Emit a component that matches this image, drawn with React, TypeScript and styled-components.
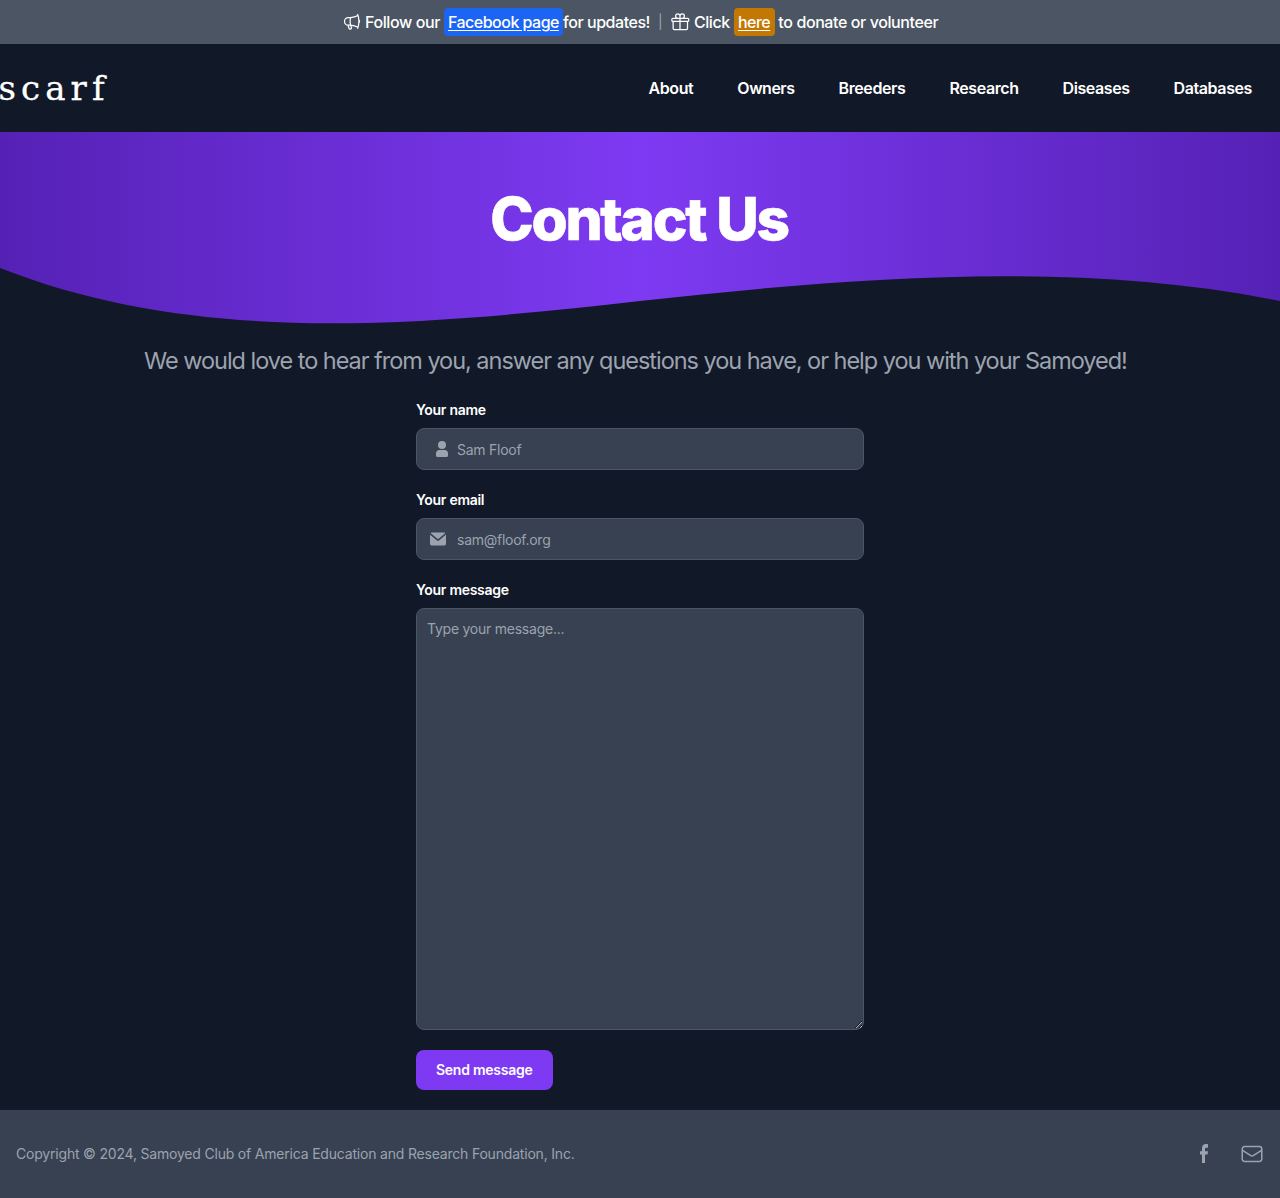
import React from 'react';
import styled, { createGlobalStyle } from 'styled-components';
import { HiOutlineMegaphone, HiOutlineGift } from 'react-icons/hi2';

const Global = createGlobalStyle`
  *, *::before, *::after { box-sizing: border-box; }
  body { margin: 0; background: #111827; font-family: Inter, "Liberation Sans", sans-serif; }
  a { color: inherit; }
`;

const Page = styled.div`
  min-height: 1198px;
  display: flex;
  flex-direction: column;
  color: #fff;
`;

const Text = styled.span<{ $ls?: number }>`
  letter-spacing: ${(p) => p.$ls ?? 0}px;
  white-space: pre;
`;

const Banner = styled.div`
  height: 44px;
  padding-left: 342px;
  background: #4b5563;
  display: flex;
  align-items: center;
  font-size: 16px;
  font-weight: 500;
  line-height: 20px;
  svg { width: 20px; height: 20px; flex: none; }
`;

const BannerItem = styled.div<{ $width: number; $gap?: number }>`
  display: flex;
  align-items: center;
  gap: ${(p) => p.$gap ?? 3}px;
  flex: none;
  width: ${(p) => p.$width}px;
`;

const Divider = styled.span`
  color: #9ca3af;
  font-size: 14px;
  font-weight: 400;
`;

const Pill = styled.a<{ $bg: string; $width: number }>`
  width: ${(p) => p.$width}px;
  height: 28px;
  display: block;
  flex: none;
  padding: 4px;
  border-radius: 4px;
  background: ${(p) => p.$bg};
  letter-spacing: -0.52px;
  white-space: nowrap;
  text-underline-offset: 2px;
`;

const Header = styled.header`
  height: 88px;
  padding-right: 28px;
  display: flex;
  align-items: center;
  justify-content: space-between;
`;

const Logo = styled.a`
  margin-left: -1.5px;
  font-family: "DejaVu Serif", serif;
  font-size: 34px;
  line-height: 40px;
  letter-spacing: 5.1px;
  text-decoration: none;
  -webkit-text-stroke: 0.3px #fff;
`;

const Nav = styled.nav`
  display: flex;
  gap: 44px;
  font-size: 16px;
  font-weight: 600;
  line-height: 24px;
`;

const Hero = styled.section`
  height: 192px;
  background: linear-gradient(90deg, #5521b5 0%, #7e3af2 50%, #5521b5 100%);
  display: flex;
  flex-direction: column;
  justify-content: space-between;
`;

const Title = styled.h1`
  margin: 57px 0 0;
  padding-right: 2px;
  text-align: center;
  font-size: 58.5px;
  line-height: 60px;
  font-weight: 800;
  letter-spacing: -2.3px;
  word-spacing: 0.5px;
  -webkit-text-stroke: 0.6px #fff;
`;

const Wave = styled.svg`
  display: block;
  width: 100%;
  height: 60px;
`;

const Lead = styled.p`
  margin: 19px 0 0 144px;
  font-size: 23.5px;
  line-height: 36px;
  color: #9ca3af;
  letter-spacing: -1.03px;
  white-space: nowrap;
`;

const Form = styled.form`
  width: 448px;
  margin: 21px auto 20px;
  display: flex;
  flex-direction: column;
  align-items: flex-start;
`;

const Label = styled.label`
  font-size: 14px;
  font-weight: 600;
  line-height: 20px;
  letter-spacing: -0.28px;
  margin-bottom: 8px;
`;

const Field = styled.div`
  width: 100%;
  height: 42px;
  margin-bottom: 20px;
  padding-left: 13px;
  display: flex;
  align-items: center;
  background: #374151;
  border: 1px solid #4b5563;
  border-radius: 8px;
`;

const IconSlot = styled.span<{ $shift?: number }>`
  display: flex;
  width: 27px;
  padding-left: ${(p) => p.$shift ?? 0}px;
  color: #9ca3af;
  svg { flex: none; }
`;

const Input = styled.input`
  flex: 1;
  padding: 2px 0 0;
  border: 0;
  outline: 0;
  background: transparent;
  color: #fff;
  font: 400 14px/20px Inter, sans-serif;
  letter-spacing: -0.26px;
  &::placeholder { color: #9ca3af; opacity: 1; }
`;

const Message = styled.textarea`
  width: 448px;
  height: 422px;
  display: block;
  margin: 0 0 20px;
  padding: 10px;
  background: #374151;
  border: 1px solid #4b5563;
  border-radius: 8px;
  color: #fff;
  font: 400 14px/20px Inter, sans-serif;
  letter-spacing: -0.24px;
  resize: vertical;
  &::placeholder { color: #9ca3af; opacity: 1; }
`;

const Send = styled.button`
  width: 136.5px;
  height: 40px;
  padding: 0;
  border: 0;
  border-radius: 8px;
  background: #7e3af2;
  color: #fff;
  font: 600 14px/20px Inter, sans-serif;
  letter-spacing: -0.25px;
`;

const Footer = styled.footer`
  height: 88px;
  padding: 0 16px;
  background: #374151;
  color: #9ca3af;
  display: flex;
  align-items: center;
  justify-content: space-between;
  font-size: 14px;
  line-height: 20px;
`;

const Social = styled.div`
  display: flex;
  align-items: center;
  gap: 24px;
`;

const links: [string, number][] = [
  ['About', -0.4],
  ['Owners', -0.5],
  ['Breeders', -0.38],
  ['Research', -0.42],
  ['Diseases', -0.42],
  ['Databases', -0.4],
];

export default function App() {
  return (
    <Page>
      <Global />
      <Banner>
        <BannerItem $width={102}>
          <HiOutlineMegaphone />
          <Text $ls={-0.4}>Follow our</Text>
        </BannerItem>
        <Pill href="#" $bg="#1c64f2" $width={119}>Facebook page</Pill>
        <BannerItem $width={95}><Text $ls={-0.45}>for updates!</Text></BannerItem>
        <BannerItem $width={12}><Divider>|</Divider></BannerItem>
        <BannerItem $width={64} $gap={4}>
          <HiOutlineGift />
          <Text $ls={-0.45}>Click</Text>
        </BannerItem>
        <Pill href="#" $bg="#c27803" $width={40.5}>here</Pill>
        <Text $ls={-0.4}>&nbsp;to donate or volunteer</Text>
      </Banner>
      <Header>
        <Logo>scarf</Logo>
        <Nav>{links.map(([name, ls]) => <Text key={name} $ls={ls}>{name}</Text>)}</Nav>
      </Header>
      <Hero>
        <Title>Contact Us</Title>
        <Wave viewBox="0 0 1280 60" preserveAspectRatio="none">
          <path fill="#111827" d="M0,4 C200,83 425,61 640,37 C860,12.500 1080,-3.500 1280,37 V60 H0 Z" />
        </Wave>
      </Hero>
      <Lead>We would love to hear from you, answer any questions you have, or help you with your Samoyed!</Lead>
      <Form>
        <Label>Your name</Label>
        <Field>
          <IconSlot $shift={6}>
            <svg width="12" height="16" viewBox="0 0 12 16" fill="currentColor">
              <circle cx="6" cy="4" r="4" />
              <path d="M3.5 9h5A3.5 3.5 0 0 1 12 12.5V14.5a1.5 1.5 0 0 1-1.5 1.5h-9A1.5 1.5 0 0 1 0 14.5V12.5A3.5 3.5 0 0 1 3.5 9Z" />
            </svg>
          </IconSlot>
          <Input placeholder="Sam Floof" />
        </Field>
        <Label>Your email</Label>
        <Field>
          <IconSlot>
            <svg width="16" height="16" viewBox="0 0 20 16" fill="currentColor">
              <path d="m10.036 8.278 9.258-7.79A1.979 1.979 0 0 0 18 0H2A1.987 1.987 0 0 0 .641.541l9.395 7.737Z" />
              <path d="M11.241 9.817c-.36.275-.801.425-1.255.427-.428 0-.845-.138-1.187-.395L0 2.6V14a2 2 0 0 0 2 2h16a2 2 0 0 0 2-2V2.5l-8.759 7.317Z" />
            </svg>
          </IconSlot>
          <Input placeholder="sam@floof.org" />
        </Field>
        <Label>Your message</Label>
        <Message placeholder="Type your message..." />
        <Send type="button">Send message</Send>
      </Form>
      <Footer>
        <Text $ls={-0.195}>Copyright © 2024, Samoyed Club of America Education and Research Foundation, Inc.</Text>
        <Social>
          <svg width="24" height="24" viewBox="0 0 24 24" fill="currentColor">
            <path d="M13 21v-8.5h2.6l.4-3.2h-3V7.2c0-.9.3-1.5 1.6-1.5H16V2.3C15.7 2.2 14.9 2.1 14 2.1c-2.4 0-4 1.4-4 4.2v3H8v3.2h2V21h3Z" />
          </svg>
          <svg width="24" height="24" viewBox="0 0 24 24" fill="none" stroke="currentColor" strokeWidth="1.5" strokeLinecap="round" strokeLinejoin="round">
            <path d="M21.75 6.75v10.5a2.25 2.25 0 0 1-2.25 2.25h-15a2.25 2.25 0 0 1-2.25-2.25V6.75m19.5 0A2.25 2.25 0 0 0 19.5 4.5h-15a2.25 2.25 0 0 0-2.25 2.25m19.5 0v.243a2.25 2.25 0 0 1-1.07 1.916l-7.5 4.615a2.25 2.25 0 0 1-2.36 0L3.32 8.91a2.25 2.25 0 0 1-1.07-1.916V6.75" />
          </svg>
        </Social>
      </Footer>
    </Page>
  );
}
